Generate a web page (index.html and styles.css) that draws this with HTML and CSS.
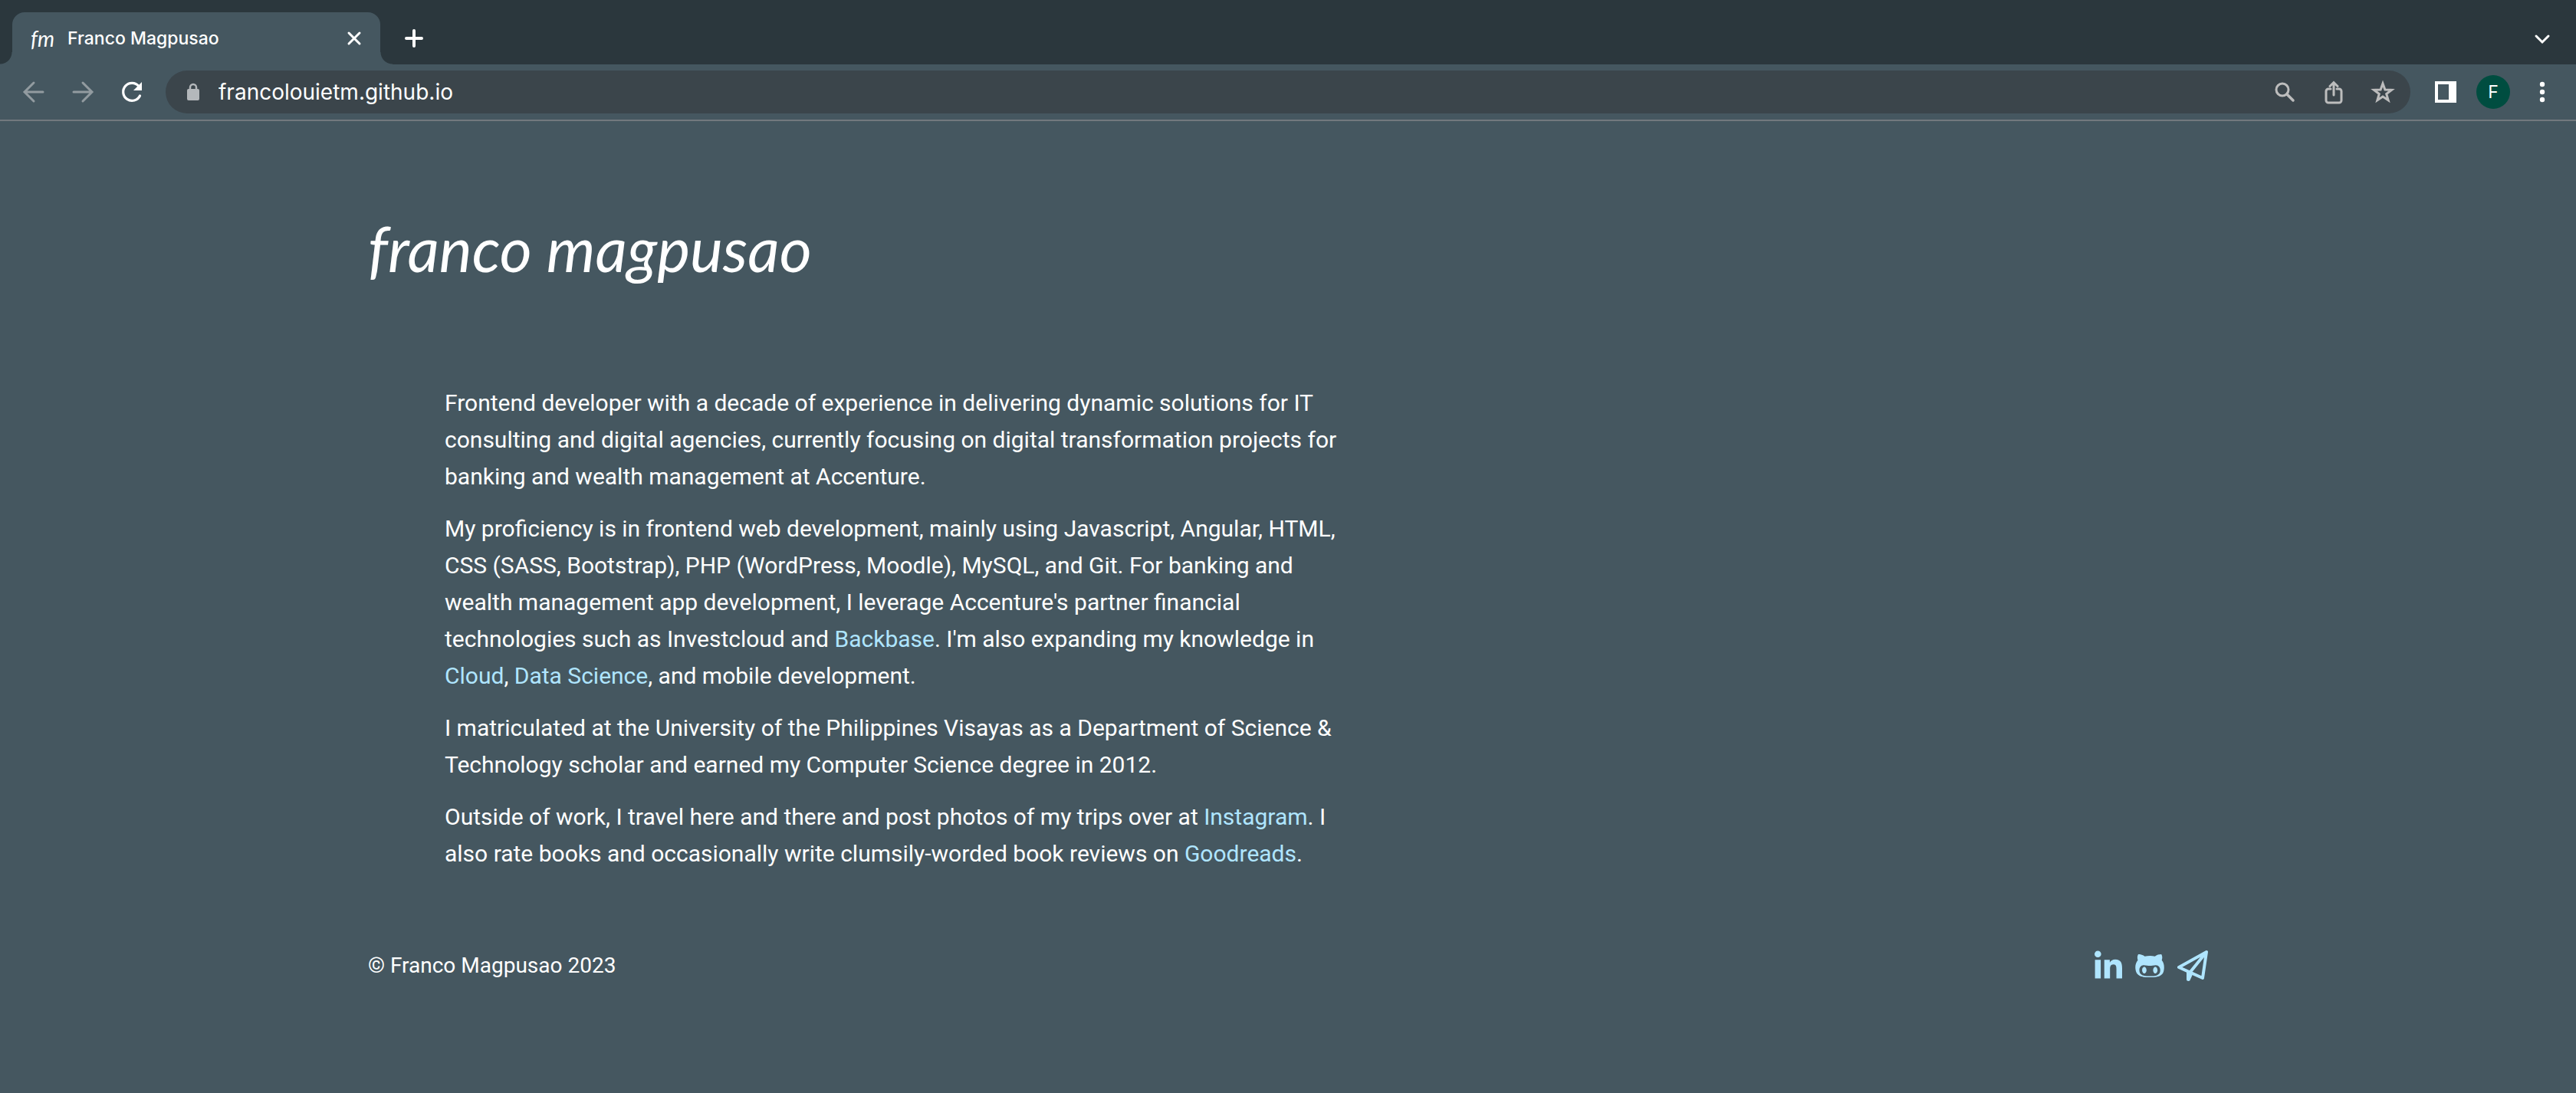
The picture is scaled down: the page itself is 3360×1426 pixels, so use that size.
FILE: index.html
```html
<!DOCTYPE html>
<html lang="en">
<head>
<meta charset="utf-8">
<meta name="viewport" content="width=device-width, initial-scale=1">
<title>Franco Magpusao</title>
<link rel="stylesheet" href="styles.css">
</head>
<body>
<header class="browser">
  <div class="tab-strip">
    <div class="tab">
      <span class="favicon">fm</span>
      <span class="tab-title">Franco Magpusao</span>
      <button class="icon-button tab-close" type="button" aria-label="Close tab">
        <svg width="20" height="20" viewBox="0 0 20 20"><path d="M3 3l14 14M17 3L3 17"/></svg>
      </button>
    </div>
    <button class="icon-button new-tab" type="button" aria-label="New tab">
      <svg width="26" height="26" viewBox="0 0 26 26"><path d="M13 3v20M3 13h20" stroke-width="4"/></svg>
    </button>
    <button class="icon-button tab-search" type="button" aria-label="Search tabs">
      <svg width="24" height="24" viewBox="0 0 24 24"><path d="M4 8l8 8 8-8"/></svg>
    </button>
  </div>
  <div class="toolbar">
    <nav class="history">
      <button class="icon-button dim" type="button" aria-label="Back">
        <svg width="32" height="32" viewBox="0 0 32 32"><path d="M28 16H5M16 4L4 16l12 12"/></svg>
      </button>
      <button class="icon-button dim" type="button" aria-label="Forward">
        <svg width="32" height="32" viewBox="0 0 32 32"><path d="M4 16h23M16 4l12 12-12 12"/></svg>
      </button>
      <button class="icon-button" type="button" aria-label="Reload">
        <svg width="32" height="32" viewBox="0 0 32 32"><path d="M26.500 21A11.500 11.500 0 1 1 25 8.500" stroke-width="3.200"/><path class="solid" d="M29 3v11H18z"/></svg>
      </button>
    </nav>
    <div class="address-bar">
      <svg class="lock" width="18" height="24" viewBox="0 0 18 24"><path d="M5 9V6a4 4 0 0 1 8 0v3" stroke-width="2.500"/><rect class="solid" x="1" y="8" width="16" height="15" rx="2"/></svg>
      <input class="url" type="text" aria-label="Address" value="francolouietm.github.io">
      <button class="icon-button muted" type="button" aria-label="Zoom">
        <svg width="32" height="32" viewBox="0 0 32 32"><circle cx="13" cy="13" r="8"/><path d="M19 19l8 8" stroke-width="3.500"/></svg>
      </button>
      <button class="icon-button muted" type="button" aria-label="Share">
        <svg width="32" height="32" viewBox="0 0 32 32"><path d="M12 12H9a3 3 0 0 0-3 3v12a3 3 0 0 0 3 3h14a3 3 0 0 0 3-3V15a3 3 0 0 0-3-3h-3M16 20V4M11 8.500l5-5 5 5"/></svg>
      </button>
      <button class="icon-button muted" type="button" aria-label="Bookmark this page">
        <svg width="32" height="32" viewBox="0 0 32 32"><path class="star" d="M16 5l2.900 8.100 8.600.2-6.800 5.200 2.400 8.200L16 22l-7.100 4.700 2.400-8.200-6.800-5.200 8.600-.2z"/></svg>
      </button>
    </div>
    <div class="tools">
      <button class="icon-button" type="button" aria-label="Side panel">
        <svg width="28" height="28" viewBox="0 0 28 28"><path class="solid" fill-rule="evenodd" d="M0 0h28v28H0zM4 4v20h14V4z"/></svg>
      </button>
      <button class="avatar" type="button" aria-label="Profile F">F</button>
      <button class="icon-button" type="button" aria-label="Menu">
        <svg width="32" height="32" viewBox="0 0 32 32"><g class="solid"><circle cx="16" cy="6" r="3.200"/><circle cx="16" cy="16" r="3.200"/><circle cx="16" cy="26" r="3.200"/></g></svg>
      </button>
    </div>
  </div>
</header>

<div class="page">
  <h1 class="wordmark">franco magpusao</h1>

  <main class="about">
    <p>Frontend developer with a decade of experience in delivering dynamic solutions for IT consulting and digital agencies, currently focusing on digital transformation projects for banking and wealth management at Accenture.</p>
    <p>My proficiency is in frontend web development, mainly using Javascript, Angular, HTML, CSS (SASS, Bootstrap), PHP (WordPress, Moodle), MySQL, and Git. For banking and wealth management app development, I leverage Accenture's partner financial technologies such as Investcloud and <a href="#backbase">Backbase</a>. I'm also expanding my knowledge in <a href="#cloud">Cloud</a>, <a href="#data-science">Data Science</a>, and mobile development.</p>
    <p>I matriculated at the University of the Philippines Visayas as a Department of Science &amp; Technology scholar and earned my Computer Science degree in 2012.</p>
    <p>Outside of work, I travel here and there and post photos of my trips over at <a href="#instagram">Instagram</a>. I also rate books and occasionally write clumsily-worded book reviews on <a href="#goodreads">Goodreads</a>.</p>
  </main>

  <footer class="footer">
    <p class="copyright">© Franco Magpusao 2023</p>
    <nav class="social">
      <a href="#linkedin" aria-label="LinkedIn">
        <svg width="36" height="40" viewBox="0 0 448 498"><path d="M100.280 453H7.400V154h92.880zM53.790 113C24.100 113 0 88.500 0 58.800a53.790 53.790 0 0 1 107.580 0c0 29.700-24.100 54.200-53.790 54.200zM447.900 453h-92.680V307.400c0-34.700-.7-79.200-48.290-79.200-48.290 0-55.690 37.700-55.690 76.700V453h-92.780V154h89.080v40.700h1.300c12.400-23.500 42.690-48.300 87.880-48.300 94 0 111.280 61.900 111.280 142.300z"/></svg>
      </a>
      <a href="#github" aria-label="GitHub">
        <svg width="38" height="40" viewBox="0 0 480 512"><path d="M186.100 328.700c0 20.900-10.900 55.100-36.700 55.100s-36.700-34.200-36.700-55.100 10.900-55.100 36.700-55.100 36.700 34.200 36.700 55.100zM480 278.200c0 31.900-3.200 65.700-17.500 95-37.900 76.600-142.100 74.800-216.700 74.800-75.800 0-186.200 2.700-225.600-74.800-14.600-29-20.200-63.100-20.200-95 0-41.900 13.900-81.500 41.500-113.600-5.200-15.800-7.700-32.400-7.700-48.800 0-21.500 4.900-32.300 14.600-51.800 45.300 0 74.300 9 108.800 36 29-6.900 58.800-10 88.700-10 27 0 54.200 2.900 80.400 9.200 34-26.700 63-35.200 107.800-35.200 9.800 19.500 14.600 30.300 14.600 51.800 0 16.400-2.600 32.700-7.700 48.200 27.500 32.400 39 72.300 39 114.200zm-64.300 50.500c0-43.900-26.700-82.600-73.500-82.600-18.900 0-37 3.400-56 6-14.900 2.300-29.800 3.200-45.100 3.200-15.200 0-30.100-.9-45.100-3.200-18.700-2.600-37-6-56-6-46.800 0-73.500 38.700-73.500 82.600 0 87.800 80.400 101.300 150.400 101.300h48.200c70.300 0 150.600-13.400 150.600-101.300zm-82.600-55.100c-25.800 0-36.700 34.200-36.700 55.100s10.900 55.100 36.700 55.100 36.700-34.200 36.700-55.100-10.900-55.100-36.700-55.100z"/></svg>
      </a>
      <a href="#contact" aria-label="Contact">
        <svg width="40" height="40" viewBox="0 0 40 40"><path class="plane" d="M38 2L2 22l31 14zM38 2L17 28"/><path d="M12 26l9 3-4.500 10c-1 1.600-4.500 1.200-4.500-1z"/></svg>
      </a>
    </nav>
  </footer>
</div>
</body>
</html>
```
FILE: styles.css
```css
* {
  box-sizing: border-box;
}

body {
  margin: 0;
  min-height: 100vh;
  background: #455760;
  color: #fff;
  font-family: Roboto, "Liberation Sans", sans-serif;
  font-size: 30px;
  line-height: 48px;
}

h1,
p {
  margin: 0;
}

a {
  color: #afe5ff;
  text-decoration: none;
}

svg {
  display: block;
}

/* Browser window */
.browser {
  border-bottom: 2px solid #72797e;
  font-family: Inter, "Liberation Sans", sans-serif;
}

.browser svg {
  fill: none;
  stroke: currentColor;
  stroke-width: 3;
  stroke-linecap: round;
}

.browser .solid {
  fill: currentColor;
  stroke: none;
}

.browser .star {
  stroke-linecap: butt;
}

.icon-button {
  display: flex;
  flex: none;
  padding: 0;
  border: 0;
  background: none;
  color: #fff;
}

.dim {
  color: #929ba0;
}

.muted {
  color: #bdbdbd;
}

.tab-strip {
  display: flex;
  align-items: flex-end;
  height: 84px;
  padding: 0 32px 0 16px;
  background: #2b373d;
}

.tab {
  position: relative;
  display: flex;
  align-items: center;
  width: 480px;
  height: 68px;
  padding: 0 24px;
  border-radius: 16px 16px 0 0;
  background: #455760;
}

/* Curved feet where the tab meets the toolbar */
.tab::before,
.tab::after {
  content: "";
  position: absolute;
  bottom: 0;
  width: 16px;
  height: 16px;
}

.tab::before {
  right: 100%;
  background: radial-gradient(circle at 0 0, #2b373d 15px, #455760 16px);
}

.tab::after {
  left: 100%;
  background: radial-gradient(circle at 100% 0, #2b373d 15px, #455760 16px);
}

.favicon {
  width: 48px;
  font-family: Lato, sans-serif;
  font-size: 28px;
  font-style: italic;
  line-height: 32px;
}

.tab-title {
  flex: 1;
  font-size: 23px;
  font-weight: 500;
  line-height: 32px;
}

.new-tab {
  margin: 0 0 21px 31px;
}

.tab-search {
  margin: 0 0 21px auto;
}

.toolbar {
  display: flex;
  align-items: center;
  height: 72px;
  padding: 0 28px;
}

.history {
  display: flex;
  gap: 32px;
  margin-right: 28px;
}

.address-bar {
  display: flex;
  flex: 1;
  align-items: center;
  gap: 32px;
  height: 56px;
  padding: 0 20px 0 27px;
  border-radius: 28px;
  background: #3b454b;
}

.lock {
  flex: none;
  color: #b4b8bb;
}

.url {
  flex: 1;
  min-width: 0;
  height: 48px;
  margin-left: -8px;
  padding: 0;
  border: 0;
  background: none;
  color: #fff;
  font: 400 28px/48px Inter, "Liberation Sans", sans-serif;
}

.tools {
  display: flex;
  align-items: center;
  gap: 26px;
  margin-left: 32px;
}

.avatar {
  width: 44px;
  height: 44px;
  padding: 0;
  border: 0;
  border-radius: 50%;
  background: #004d40;
  color: #fff;
  font: 23px/44px Inter, "Liberation Sans", sans-serif;
}

/* Site */
.page {
  max-width: 2480px;
  margin: 0 auto;
  padding: 112px 40px 100px;
}

.wordmark {
  font-family: Lato, sans-serif;
  font-size: 81px;
  font-style: italic;
  font-weight: 400;
  line-height: 108px;
}

.about {
  display: grid;
  gap: 20px;
  max-width: 1280px;
  padding: 124px 0 98px 100px;
}

.footer {
  display: flex;
  align-items: center;
  justify-content: space-between;
}

.copyright {
  font-size: 28px;
}

.social {
  display: flex;
  gap: 17px;
}

.social svg {
  fill: currentColor;
}

.social .plane {
  fill: none;
  stroke: currentColor;
  stroke-width: 4;
  stroke-linejoin: round;
}
```
